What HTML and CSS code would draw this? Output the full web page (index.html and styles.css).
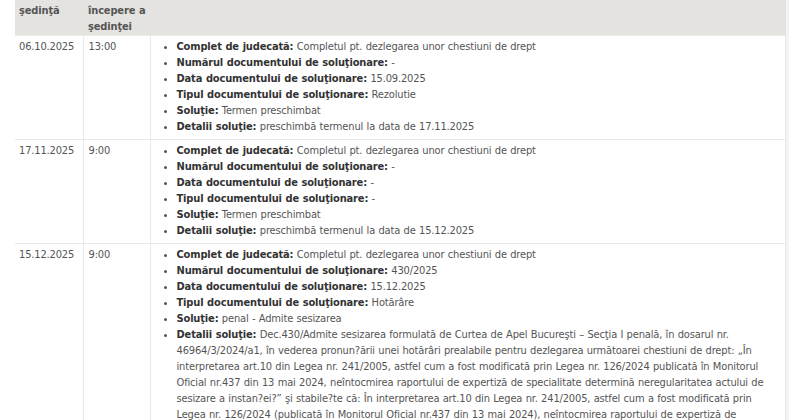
FILE: index.html
```html
<!DOCTYPE html>
<html lang="ro">
<head>
    <meta charset="UTF-8">
    <meta name="viewport" content="width=device-width, initial-scale=1.0">
    <title>Şedinţe</title>
    <link rel="stylesheet" href="styles.css">
</head>
<body>
    <div class="page">
        <table class="sedinte">
            <colgroup>
                <col class="col-data">
                <col class="col-ora">
                <col>
            </colgroup>
            <thead>
                <tr>
                    <th>Data şedinţă</th>
                    <th>Ora de începere a şedinţei</th>
                    <th></th>
                </tr>
            </thead>
            <tbody>
                <tr>
                    <td>06.10.2025</td>
                    <td>13:00</td>
                    <td>
                        <ul>
                            <li><b>Complet de judecată:</b> Completul pt. dezlegarea unor chestiuni de drept</li>
                            <li><b>Numărul documentului de soluţionare:</b> -</li>
                            <li><b>Data documentului de soluţionare:</b> 15.09.2025</li>
                            <li><b>Tipul documentului de soluţionare:</b> Rezolutie</li>
                            <li><b>Soluţie:</b> Termen preschimbat</li>
                            <li><b>Detalii soluţie:</b> preschimbă termenul la data de 17.11.2025</li>
                        </ul>
                    </td>
                </tr>
                <tr>
                    <td>17.11.2025</td>
                    <td>9:00</td>
                    <td>
                        <ul>
                            <li><b>Complet de judecată:</b> Completul pt. dezlegarea unor chestiuni de drept</li>
                            <li><b>Numărul documentului de soluţionare:</b> -</li>
                            <li><b>Data documentului de soluţionare:</b> -</li>
                            <li><b>Tipul documentului de soluţionare:</b> -</li>
                            <li><b>Soluţie:</b> Termen preschimbat</li>
                            <li><b>Detalii soluţie:</b> preschimbă termenul la data de 15.12.2025</li>
                        </ul>
                    </td>
                </tr>
                <tr>
                    <td>15.12.2025</td>
                    <td>9:00</td>
                    <td>
                        <ul>
                            <li><b>Complet de judecată:</b> Completul pt. dezlegarea unor chestiuni de drept</li>
                            <li><b>Numărul documentului de soluţionare:</b> 430/2025</li>
                            <li><b>Data documentului de soluţionare:</b> 15.12.2025</li>
                            <li><b>Tipul documentului de soluţionare:</b> Hotărâre</li>
                            <li><b>Soluţie:</b> penal - Admite sesizarea</li>
                            <li><b>Detalii soluţie:</b> Dec.430/Admite sesizarea formulată de Curtea de Apel Bucureşti – Secţia I penală, în dosarul nr. 46964/3/2024/a1, în vederea pronun?ării unei hotărâri prealabile pentru dezlegarea următoarei chestiuni de drept: „În interpretarea art.10 din Legea nr. 241/2005, astfel cum a fost modificată prin Legea nr. 126/2024 publicată în Monitorul Oficial nr.437 din 13 mai 2024, neîntocmirea raportului de expertiză de specialitate determină neregularitatea actului de sesizare a instan?ei?” şi stabile?te că: În interpretarea art.10 din Legea nr. 241/2005, astfel cum a fost modificată prin Legea nr. 126/2024 (publicată în Monitorul Oficial nr.437 din 13 mai 2024), neîntocmirea raportului de expertiză de specialitate determină neregularitatea actului de sesizare a instanţei.</li>
                        </ul>
                    </td>
                </tr>
            </tbody>
        </table>
    </div>
</body>
</html>
```

FILE: styles.css
```css
body {
    margin: 0;
    font-family: "DejaVu Sans Condensed", "DejaVu Sans", Verdana, sans-serif;
    font-size: 11px;
    line-height: 16px;
    letter-spacing: -0.15px;
    word-spacing: 0.4px;
    color: #555;
    background: #fff;
}
.page {
    margin-top: -17px;
    padding-left: 15px;
    width: 771px;
    border-right: 3px solid #f4f4f2;
}
.sedinte {
    width: 100%;
    border-collapse: collapse;
    table-layout: fixed;
}
.sedinte .col-data {
    width: 68px;
}
.sedinte .col-ora {
    width: 67px;
}
.sedinte th {
    background-color: #e4e3df;
    color: #555;
    font-weight: bold;
    text-align: left;
    vertical-align: top;
    padding: 4px 4px 0 4px;
}
.sedinte th:nth-child(2) {
    padding-left: 5px;
}
.sedinte td {
    vertical-align: top;
    padding: 3px 5px 4px 4px;
    border: 1px solid #e9e9e7;
}
.sedinte td:nth-child(2) {
    padding-left: 5px;
}
.sedinte td:first-child {
    border-left: none;
}
.sedinte ul {
    margin: 0;
    padding-left: 22px;
}
.sedinte b {
    color: #333;
}
```
